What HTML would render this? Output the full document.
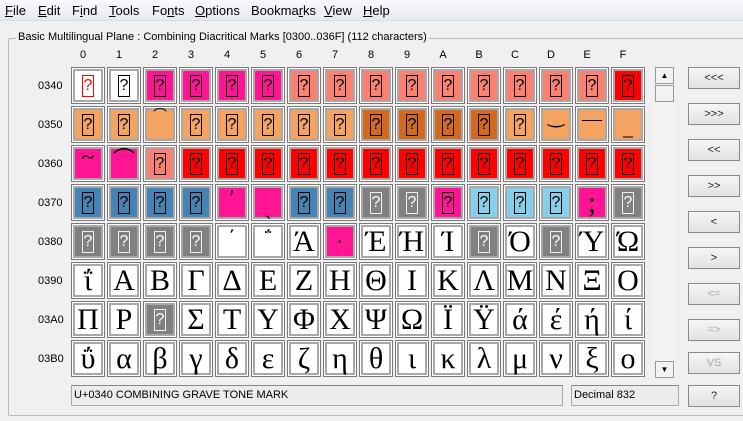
<!DOCTYPE html><html><head><meta charset="utf-8"><style>
body{margin:0;width:743px;height:421px;background:#f0f0f0;font-family:"Liberation Sans",sans-serif;position:relative;overflow:hidden}
.menu{position:absolute;left:0;top:0;width:743px;height:20px;background:linear-gradient(#f8f9fb,#e6eaf0);border-bottom:1px solid #d8dce2;font-size:13px}
.menu span{position:absolute;top:3px}
.gb{position:absolute;left:8px;top:38px;width:760px;height:376px;border:1px solid #b8b8b8;border-radius:2px}
.gt{position:absolute;left:16px;top:31px;background:#f0f0f0;font-size:11px;padding:0 2px}
.ch{position:absolute;top:49px;font-size:11px;width:36px;text-align:center}
.rl{position:absolute;left:38px;font-size:11px}
.row{position:absolute;left:71px;display:flex}
.c{width:34px;height:37px;margin-right:2px;box-sizing:border-box;border:1px solid #7a7a7a;box-shadow:inset 0 0 0 1px #fff,inset 0 0 0 3px #a8a8a8;background:#fff;display:flex;align-items:center;justify-content:center;font-family:"Liberation Serif",serif;font-size:30px;line-height:1;overflow:hidden}
.q{display:inline-block;width:10px;height:20px;border:1px solid #000;font-family:"Liberation Sans",sans-serif;font-size:16px;line-height:20px;text-align:center}
.w{background:#fff}.m{background:#ff1493}.s{background:#fa8072}.r{background:#ff0000}.o{background:#f4a460}.d{background:#d2691e}.b{background:#4682b4}.k{background:#87ceeb}.g{background:#808080}
.g .q{border-color:#eee;color:#fff}
.btn{position:absolute;left:688px;width:52px;height:22px;box-sizing:border-box;border:1px solid #8a8a8a;background:linear-gradient(#f6f6f6,#e2e2e2);font-size:11px;text-align:center;line-height:20px;color:#222}
.dis{color:#aaa}
.sb{position:absolute;left:655px;top:67px;width:19px;height:311px;background:#f3f3f3}
.sbb{position:absolute;left:0;width:19px;height:17px;box-sizing:border-box;border:1px solid #999;background:#f2f2f2;font-size:8px;text-align:center;line-height:15px}
.st{position:absolute;top:385px;height:21px;box-sizing:border-box;border:1px solid #aaa;border-top-color:#888;background:#ececec;font-size:11px;padding:3px 2px}
</style></head><body>
<div class="menu">
<span style="left:5px"><u>F</u>ile</span><span style="left:38px"><u>E</u>dit</span><span style="left:72px">F<u>i</u>nd</span><span style="left:109px"><u>T</u>ools</span><span style="left:152px">Fo<u>n</u>ts</span><span style="left:195px"><u>O</u>ptions</span><span style="left:251px">Bookma<u>r</u>ks</span><span style="left:324px"><u>V</u>iew</span><span style="left:363px"><u>H</u>elp</span>
</div>
<div class="gb"></div>
<div class="gt">Basic Multilingual Plane : Combining Diacritical Marks [0300..036F] (112 characters)</div>
<div class="ch" style="left:65px">0</div><div class="ch" style="left:101px">1</div><div class="ch" style="left:137px">2</div><div class="ch" style="left:173px">3</div><div class="ch" style="left:209px">4</div><div class="ch" style="left:245px">5</div><div class="ch" style="left:281px">6</div><div class="ch" style="left:317px">7</div><div class="ch" style="left:353px">8</div><div class="ch" style="left:389px">9</div><div class="ch" style="left:425px">A</div><div class="ch" style="left:461px">B</div><div class="ch" style="left:497px">C</div><div class="ch" style="left:533px">D</div><div class="ch" style="left:569px">E</div><div class="ch" style="left:605px">F</div>
<div class="rl" style="top:80px">0340</div><div class="rl" style="top:119px">0350</div><div class="rl" style="top:158px">0360</div><div class="rl" style="top:197px">0370</div><div class="rl" style="top:236px">0380</div><div class="rl" style="top:275px">0390</div><div class="rl" style="top:314px">03A0</div><div class="rl" style="top:353px">03B0</div>

<div class="row" style="top:67px"><div class="c w"><span class="q" style="border-color:red;color:red">?</span></div><div class="c w"><span class="q">?</span></div><div class="c m"><span class="q">?</span></div><div class="c m"><span class="q">?</span></div><div class="c m"><span class="q">?</span></div><div class="c m"><span class="q">?</span></div><div class="c s"><span class="q">?</span></div><div class="c s"><span class="q">?</span></div><div class="c s"><span class="q">?</span></div><div class="c s"><span class="q">?</span></div><div class="c s"><span class="q">?</span></div><div class="c s"><span class="q">?</span></div><div class="c s"><span class="q">?</span></div><div class="c s"><span class="q">?</span></div><div class="c s"><span class="q">?</span></div><div class="c r"><span class="q">?</span></div></div>

<div class="row" style="top:106px"><div class="c o"><span class="q">?</span></div><div class="c o"><span class="q">?</span></div><div class="c o" style="align-items:flex-start;font-size:14px;padding-top:3px">&#x2312;</div><div class="c o"><span class="q">?</span></div><div class="c o"><span class="q">?</span></div><div class="c o"><span class="q">?</span></div><div class="c o"><span class="q">?</span></div><div class="c o"><span class="q">?</span></div><div class="c d"><span class="q">?</span></div><div class="c d"><span class="q">?</span></div><div class="c d"><span class="q">?</span></div><div class="c d"><span class="q">?</span></div><div class="c o"><span class="q">?</span></div><div class="c o" style="align-items:flex-start;font-size:20px">&#x203F;</div><div class="c o" style="align-items:flex-start;font-size:20px;padding-top:2px">&#x2014;</div><div class="c o" style="align-items:flex-end;font-size:20px;padding-bottom:3px">_</div></div>

<div class="row" style="top:145px"><div class="c m" style="align-items:flex-start;font-size:24px;padding-top:0">~</div><div class="c m" style="align-items:flex-start;font-size:22px;padding-top:3px">&#x2312;</div><div class="c s"><span class="q">?</span></div><div class="c r"><span class="q">?</span></div><div class="c r"><span class="q">?</span></div><div class="c r"><span class="q">?</span></div><div class="c r"><span class="q">?</span></div><div class="c r"><span class="q">?</span></div><div class="c r"><span class="q">?</span></div><div class="c r"><span class="q">?</span></div><div class="c r"><span class="q">?</span></div><div class="c r"><span class="q">?</span></div><div class="c r"><span class="q">?</span></div><div class="c r"><span class="q">?</span></div><div class="c r"><span class="q">?</span></div><div class="c r"><span class="q">?</span></div></div>

<div class="row" style="top:184px"><div class="c b"><span class="q">?</span></div><div class="c b"><span class="q">?</span></div><div class="c b"><span class="q">?</span></div><div class="c b"><span class="q">?</span></div><div class="c m" style="align-items:flex-start;font-size:22px;padding-top:2px">&#x2b9;</div><div class="c m" style="align-items:flex-end;font-size:22px;padding-bottom:2px">&#x2cf;</div><div class="c b"><span class="q">?</span></div><div class="c b"><span class="q">?</span></div><div class="c g"><span class="q">?</span></div><div class="c g"><span class="q">?</span></div><div class="c m"><span class="q">?</span></div><div class="c k"><span class="q">?</span></div><div class="c k"><span class="q">?</span></div><div class="c k"><span class="q">?</span></div><div class="c m">;</div><div class="c g"><span class="q">?</span></div></div>

<div class="row" style="top:223px"><div class="c g"><span class="q">?</span></div><div class="c g"><span class="q">?</span></div><div class="c g"><span class="q">?</span></div><div class="c g"><span class="q">?</span></div><div class="c w" style="align-items:flex-start;font-size:22px;padding-top:3px">&#x384;</div><div class="c w" style="align-items:flex-start;font-size:22px;padding-top:3px">&#x385;</div><div class="c w">&#x386;</div><div class="c m" style="font-size:22px">&#x387;</div><div class="c w">&#x388;</div><div class="c w">&#x389;</div><div class="c w">&#x38A;</div><div class="c g"><span class="q">?</span></div><div class="c w">&#x38C;</div><div class="c g"><span class="q">?</span></div><div class="c w">&#x38E;</div><div class="c w">&#x38F;</div></div>

<div class="row" style="top:262px"><div class="c w">&#x390;</div><div class="c w">&#x391;</div><div class="c w">&#x392;</div><div class="c w">&#x393;</div><div class="c w">&#x394;</div><div class="c w">&#x395;</div><div class="c w">&#x396;</div><div class="c w">&#x397;</div><div class="c w">&#x398;</div><div class="c w">&#x399;</div><div class="c w">&#x39A;</div><div class="c w">&#x39B;</div><div class="c w">&#x39C;</div><div class="c w">&#x39D;</div><div class="c w">&#x39E;</div><div class="c w">&#x39F;</div></div>

<div class="row" style="top:301px"><div class="c w">&#x3A0;</div><div class="c w">&#x3A1;</div><div class="c g"><span class="q">?</span></div><div class="c w">&#x3A3;</div><div class="c w">&#x3A4;</div><div class="c w">&#x3A5;</div><div class="c w">&#x3A6;</div><div class="c w">&#x3A7;</div><div class="c w">&#x3A8;</div><div class="c w">&#x3A9;</div><div class="c w">&#x3AA;</div><div class="c w">&#x3AB;</div><div class="c w">&#x3AC;</div><div class="c w">&#x3AD;</div><div class="c w">&#x3AE;</div><div class="c w">&#x3AF;</div></div>

<div class="row" style="top:340px"><div class="c w">&#x3B0;</div><div class="c w">&#x3B1;</div><div class="c w">&#x3B2;</div><div class="c w">&#x3B3;</div><div class="c w">&#x3B4;</div><div class="c w">&#x3B5;</div><div class="c w">&#x3B6;</div><div class="c w">&#x3B7;</div><div class="c w">&#x3B8;</div><div class="c w">&#x3B9;</div><div class="c w">&#x3BA;</div><div class="c w">&#x3BB;</div><div class="c w">&#x3BC;</div><div class="c w">&#x3BD;</div><div class="c w">&#x3BE;</div><div class="c w">&#x3BF;</div></div>

<div class="sb"><div class="sbb" style="top:0">&#9650;</div><div class="sbb" style="top:18px;height:17px"></div><div class="sbb" style="top:294px">&#9660;</div></div>

<div class="btn" style="top:67px">&lt;&lt;&lt;</div>
<div class="btn" style="top:103px">&gt;&gt;&gt;</div>
<div class="btn" style="top:139px">&lt;&lt;</div>
<div class="btn" style="top:175px">&gt;&gt;</div>
<div class="btn" style="top:211px">&lt;</div>
<div class="btn" style="top:247px">&gt;</div>
<div class="btn dis" style="top:283px">&lt;=</div>
<div class="btn dis" style="top:319px">=&gt;</div>
<div class="btn dis" style="top:352px">VS</div>
<div class="btn" style="top:385px">?</div>

<div class="st" style="left:71px;width:492px">U+0340 COMBINING GRAVE TONE MARK</div>
<div class="st" style="left:571px;width:108px">Decimal 832</div>
</body></html>
